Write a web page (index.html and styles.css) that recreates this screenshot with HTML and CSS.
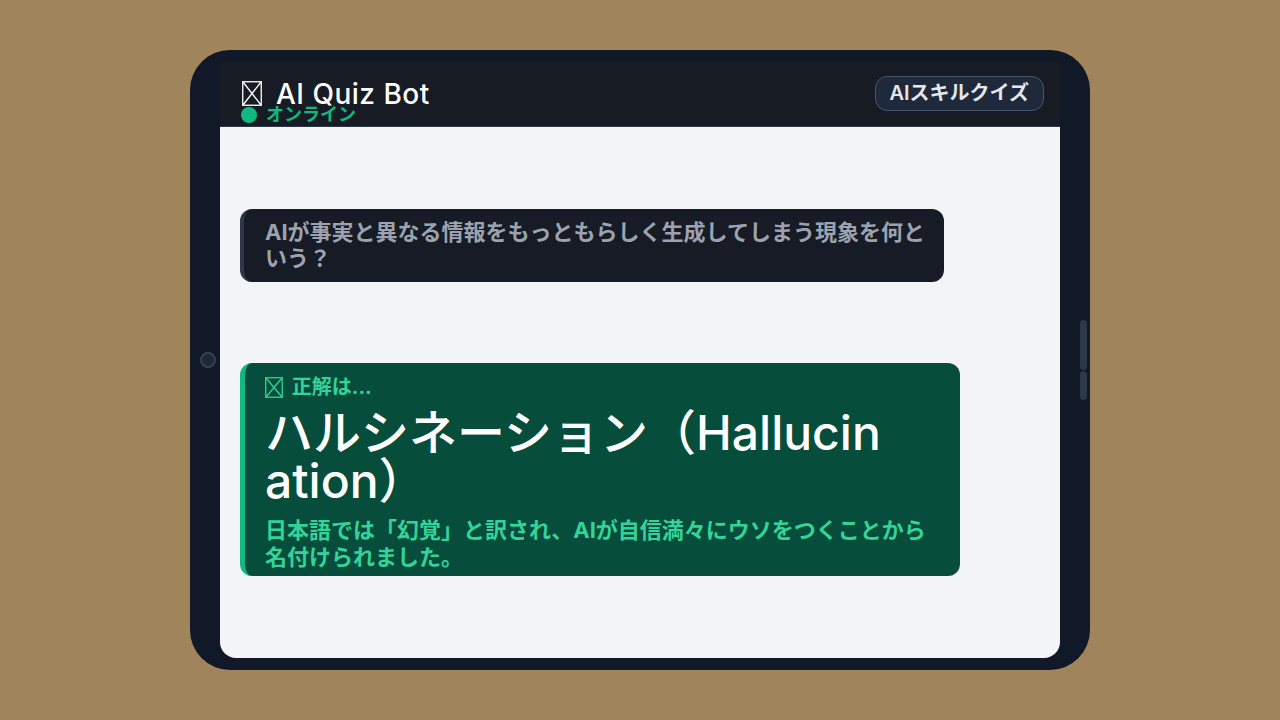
FILE: index.html
```html
<!DOCTYPE html>
<html lang="ja">
<head>
	<meta charset="UTF-8">
	<title>AI Quiz Bot</title>
	<link rel="stylesheet" href="styles.css">
</head>
<body>
<div class="device">
    <span class="camera"></span>
    <span class="side-btn side-btn-top"></span>
    <span class="side-btn side-btn-bottom"></span>
    <div class="screen">
        <header class="chat-header">
            <div class="bot-info">
                <div class="bot-name"><svg class="tofu tofu-lg" viewBox="0 0 20 25"><rect x="0.75" y="0.75" width="18.5" height="23.5"/><path d="M1 1L19 24M19 1L1 24"/></svg> AI Quiz Bot</div>
                <div class="bot-status"><span class="dot"></span>オンライン</div>
            </div>
            <span class="quiz-badge">AIスキルクイズ</span>
        </header>
        <main class="chat-body">
            <div class="bubble bubble-question">AIが事実と異なる情報をもっともらしく生成してしまう現象を何という？</div>
            <div class="bubble bubble-answer">
                <div class="answer-label"><svg class="tofu tofu-sm" viewBox="0 0 18 21"><rect x="0.75" y="0.75" width="16.5" height="19.5"/><path d="M1 1L17 20M17 1L1 20"/></svg> 正解は...</div>
                <div class="answer-title">ハルシネーション（Hallucination）</div>
                <div class="answer-note">日本語では「幻覚」と訳され、AIが自信満々にウソをつくことから名付けられました。</div>
            </div>
        </main>
    </div>
</div>
</body>
</html>
```

FILE: styles.css
```css
body,html{
    padding: 0;
    margin: 0;
    height: 100%;
    font-family: Inter, "Noto Sans CJK JP", sans-serif;
    color: #000000;
}
body{
    background: #a0845c;
    display: flex;
    align-items: center;
    justify-content: center;
}

.device{
    position: relative;
    width: 900px;
    height: 620px;
    box-sizing: border-box;
    padding: 12px 30px;
    background: #111827;
    border-radius: 40px;
}
.camera{
    position: absolute;
    left: 10px;
    top: 302px;
    width: 12px;
    height: 12px;
    border-radius: 50%;
    background: #1f2937;
    border: 2px solid #374151;
}
.side-btn{
    position: absolute;
    right: 3px;
    width: 7px;
    background: #2d3748;
    border-radius: 4px;
}
.side-btn-top{
    top: 270px;
    height: 50px;
}
.side-btn-bottom{
    top: 321px;
    height: 29px;
}

.screen{
    height: 100%;
    display: flex;
    flex-direction: column;
    background: #f3f4f6;
    border-radius: 16px;
}

.tofu{
    fill: none;
    stroke: currentColor;
    stroke-width: 1.3;
}
.tofu-lg{
    width: 20px;
    height: 25px;
    margin-right: 6px;
    vertical-align: -2px;
}
.tofu-sm{
    width: 18px;
    height: 21px;
    margin-right: 4px;
    vertical-align: -4px;
}

.chat-header{
    height: 65px;
    box-sizing: border-box;
    padding: 18px 16px 0 22px;
    display: flex;
    justify-content: space-between;
    background: #171b24;
    border-bottom: 1px solid #2d3748;
}
.bot-name{
    height: 28px;
    font-size: 28px;
    line-height: 28px;
    font-weight: 500;
    letter-spacing: 0.5px;
    color: #ffffff;
}
.bot-status{
    display: flex;
    align-items: center;
    height: 18px;
    margin-top: -2px;
    font-size: 18px;
    line-height: 18px;
    font-weight: 700;
    color: #10b981;
}
.dot{
    width: 16px;
    height: 16px;
    margin: 0 9px 0 -1px;
    border-radius: 50%;
    background: #10b981;
}
.quiz-badge{
    margin-top: -4px;
    height: 35px;
    box-sizing: border-box;
    padding: 4px 14px;
    font-size: 20px;
    line-height: 25px;
    font-weight: 600;
    color: #e5e7eb;
    background: #1e293b;
    border: 1px solid #475569;
    border-radius: 12px;
}

.chat-body{
    flex: 1;
    padding: 0 20px;
    display: flex;
    flex-direction: column;
    justify-content: space-evenly;
    align-items: flex-start;
}
.bubble{
    box-sizing: border-box;
    border-radius: 12px;
    word-break: break-all;
}
.bubble-question{
    max-width: 88%;
    padding: 10px 16px 10px 21px;
    background: #161b26;
    border-left: 4px solid #2d3748;
    font-size: 22px;
    line-height: 26.4px;
    font-weight: 700;
    color: #9ca3af;
}
.bubble-answer{
    width: 90%;
    padding: 12px 20px 6px 20px;
    background: #064e3b;
    border-left: 5px solid #10b981;
}
.answer-label{
    height: 24px;
    font-size: 20px;
    line-height: 24px;
    font-weight: 700;
    color: #34d399;
}
.answer-title{
    margin: 10px 40px 0 0;
    font-size: 48px;
    line-height: 48px;
    font-weight: 500;
    color: #ffffff;
}
.answer-note{
    margin-top: 12px;
    font-size: 22px;
    line-height: 26.4px;
    font-weight: 700;
    color: #34d399;
}
```
